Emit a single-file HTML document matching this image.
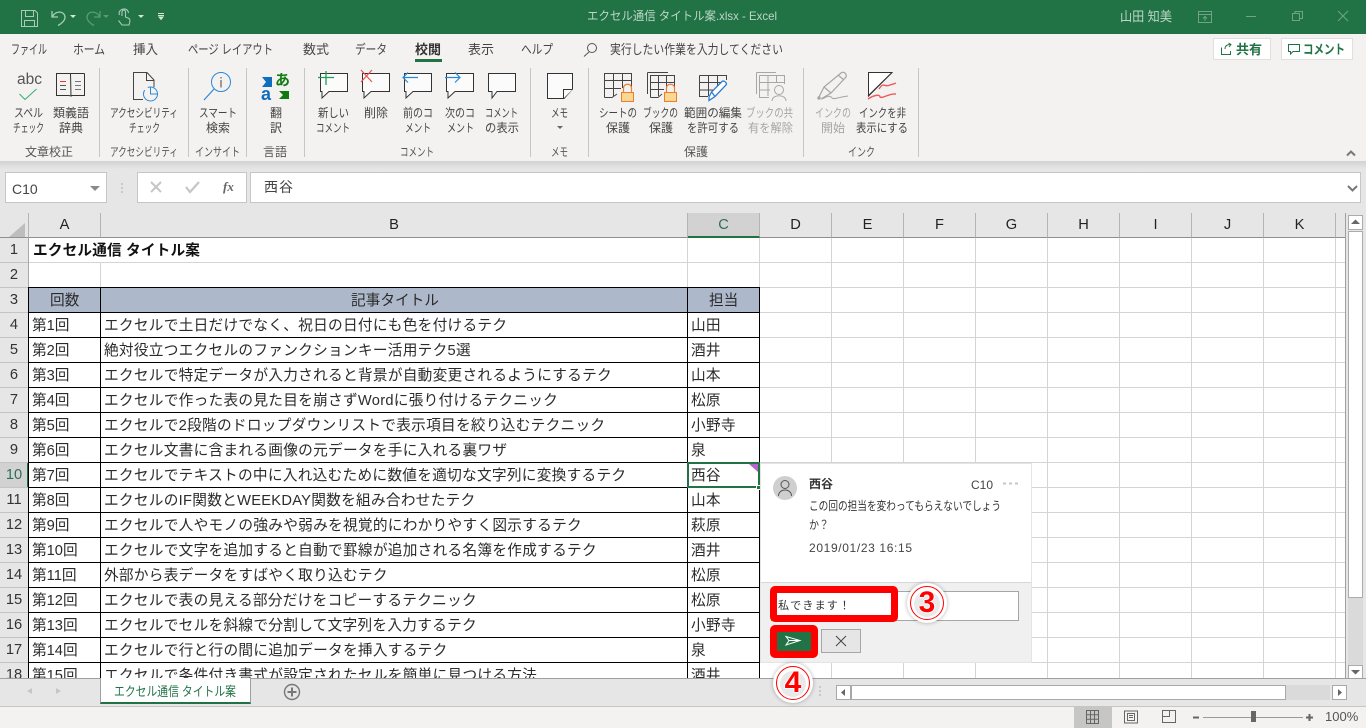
<!DOCTYPE html>
<html lang="ja"><head><meta charset="utf-8"><title>エクセル通信 タイトル案.xlsx - Excel</title>
<style>
*{box-sizing:border-box}
html,body{margin:0;padding:0;width:1366px;height:728px;overflow:hidden;background:#f3f2f1}
body{position:relative;font-family:"Liberation Sans","Noto Sans CJK JP",sans-serif;color:#333}
.a{position:absolute}
.t{position:absolute;white-space:nowrap;font-size:12px;line-height:16px;color:#444}
.c{transform:translateX(-50%);text-align:center}
.sep{position:absolute;top:68px;width:1px;height:89px;background:#c6c6c6}
.hl{position:absolute;top:213px;height:25px;background:#e6e6e6;font-size:14.67px;line-height:25px;text-align:center;color:#222;border-right:1px solid #b4b4b4;border-bottom:1px solid #8f8f8f}
.row{position:relative;height:25px;font-size:14.67px;line-height:26px;color:#2b2b2b;white-space:nowrap}
.row b{position:absolute;left:0;width:28px;height:24px;text-align:center;font-weight:normal;color:#333;line-height:25px}
.row i{position:absolute;font-style:normal;left:32px}
.row u{position:absolute;text-decoration:none;left:104px;letter-spacing:.28px}
.row s{position:absolute;text-decoration:none;left:691px;letter-spacing:.28px}
svg{position:absolute;left:0;top:0}
svg text{font-family:"Liberation Sans","Noto Sans CJK JP",sans-serif;font-size:12px;fill:#444}
.d{fill:#a6a6a6}
.g{fill:#555}
</style></head><body>

<div class="a" style="left:0;top:0;width:1366px;height:34px;background:#217346"></div>
<div class="a" style="left:0;top:34px;width:1366px;height:127px;background:#f3f2f1"></div>
<div class="a" style="left:0;top:161px;width:1366px;height:52px;background:#e6e6e6"></div>
<div class="a" style="left:0;top:161px;width:1366px;height:8px;background:linear-gradient(#d2d2d2,#e6e6e6)"></div>

<div class="a" style="left:415px;top:59px;width:27px;height:3px;background:#217346"></div>

<div class="a" style="left:1213px;top:38px;width:58px;height:22px;background:#fff;border:1px solid #e1dfdd"></div>
<div class="a" style="left:1281px;top:38px;width:72px;height:22px;background:#fff;border:1px solid #e1dfdd"></div>

<div class="sep" style="left:99px"></div><div class="sep" style="left:188px"></div><div class="sep" style="left:246px"></div><div class="sep" style="left:304px"></div><div class="sep" style="left:530px"></div><div class="sep" style="left:588px"></div><div class="sep" style="left:803px"></div><div class="sep" style="left:918px"></div>

<!-- formula bar -->
<div class="a" style="left:5px;top:172px;width:102px;height:31px;background:#fff;border:1px solid #c6c6c6"></div>
<div class="t" style="left:12px;top:181px;font-size:14px;color:#444">C10</div>
<div class="a" style="left:137px;top:172px;width:110px;height:31px;background:#fff;border:1px solid #c6c6c6"></div>
<div class="a" style="left:250px;top:172px;width:1111px;height:31px;background:#fff;border:1px solid #c6c6c6"></div>
<div class="t" style="left:264px;top:178px;font-size:14px;line-height:18px;letter-spacing:1px;color:#444">西谷</div>
<div class="t" style="left:223px;top:179px;font:italic bold 13px 'Liberation Serif',serif;color:#666">fx</div>

<!-- grid base -->
<div class="a" style="left:0;top:213px;width:29px;height:25px;background:#e6e6e6;border-right:1px solid #b4b4b4;border-bottom:1px solid #8f8f8f"></div>
<div class="hl" style="left:29px;width:72px">A</div>
<div class="hl" style="left:101px;width:587px">B</div>
<div class="hl" style="left:688px;width:72px;background:#d2d2d2;border-bottom:2px solid #217346;color:#2f6f5a;line-height:24px">C</div>
<div class="hl" style="left:760px;width:72px">D</div>
<div class="hl" style="left:832px;width:72px">E</div>
<div class="hl" style="left:904px;width:72px">F</div>
<div class="hl" style="left:976px;width:72px">G</div>
<div class="hl" style="left:1048px;width:72px">H</div>
<div class="hl" style="left:1120px;width:72px">I</div>
<div class="hl" style="left:1192px;width:72px">J</div>
<div class="hl" style="left:1264px;width:72px">K</div>
<div class="a" style="left:1336px;top:213px;width:30px;height:25px;background:#e6e6e6"></div>
<div class="a" style="left:1336px;top:237px;width:9px;height:1px;background:#8f8f8f"></div>

<div class="a" style="left:0;top:238px;width:1345px;height:440px;overflow:hidden;background:#fff">
  <div class="a" style="left:760px;top:0;width:585px;height:440px;background-image:linear-gradient(#d4d4d4 1px,transparent 1px),linear-gradient(90deg,transparent 71px,#d4d4d4 71px);background-size:100% 25px,72px 100%;background-position:0 24px,0 0"></div>
  <div class="a" style="left:29px;top:24px;width:731px;height:1px;background:#d4d4d4"></div>
  <div class="a" style="left:100px;top:25px;width:1px;height:24px;background:#d4d4d4"></div>
  <div class="a" style="left:687px;top:0;width:1px;height:49px;background:#d4d4d4"></div>
  <div class="a" style="left:759px;top:0;width:1px;height:49px;background:#d4d4d4"></div>
  <div class="a" style="left:0;top:0;width:29px;height:440px;background-color:#e6e6e6;background-image:linear-gradient(#c4c4c4 1px,transparent 1px);background-size:100% 25px;background-position:0 24px;border-right:1px solid #a8a8a8"></div>
  <div class="a" style="left:0;top:225px;width:29px;height:24px;background:#d2d2d2;border-right:2px solid #217346"></div>
  <div class="a" style="left:29px;top:50px;width:730px;height:24px;background:#adb9ca"></div>
  <div class="a" style="left:28px;top:49px;width:732px;height:391px;background-image:linear-gradient(#000 1px,transparent 1px);background-size:100% 25px"></div>
  <div class="a" style="left:28px;top:49px;width:1px;height:391px;background:#000"></div>
  <div class="a" style="left:100px;top:49px;width:1px;height:391px;background:#000"></div>
  <div class="a" style="left:687px;top:49px;width:1px;height:391px;background:#000"></div>
  <div class="a" style="left:759px;top:49px;width:1px;height:391px;background:#000"></div>
  <div class="a" style="left:0;top:0;width:1345px">
    <div class="row"><b>1</b><i style="font-weight:bold;left:33px;color:#111;letter-spacing:.15px">エクセル通信 タイトル案</i></div>
    <div class="row"><b>2</b></div>
    <div class="row"><b>3</b><i style="left:50px">回数</i><u style="left:351px;letter-spacing:0">記事タイトル</u><s style="left:709px;letter-spacing:0">担当</s></div>
    <div class="row"><b>4</b><i>第1回</i><u>エクセルで土日だけでなく、祝日の日付にも色を付けるテク</u><s>山田</s></div>
    <div class="row"><b>5</b><i>第2回</i><u>絶対役立つエクセルのファンクションキー活用テク5選</u><s>酒井</s></div>
    <div class="row"><b>6</b><i>第3回</i><u>エクセルで特定データが入力されると背景が自動変更されるようにするテク</u><s>山本</s></div>
    <div class="row"><b>7</b><i>第4回</i><u>エクセルで作った表の見た目を崩さずWordに張り付けるテクニック</u><s>松原</s></div>
    <div class="row"><b>8</b><i>第5回</i><u>エクセルで2段階のドロップダウンリストで表示項目を絞り込むテクニック</u><s>小野寺</s></div>
    <div class="row"><b>9</b><i>第6回</i><u>エクセル文書に含まれる画像の元データを手に入れる裏ワザ</u><s>泉</s></div>
    <div class="row"><b style="color:#2f6f5a">10</b><i>第7回</i><u>エクセルでテキストの中に入れ込むために数値を適切な文字列に変換するテク</u><s>西谷</s></div>
    <div class="row"><b>11</b><i>第8回</i><u>エクセルのIF関数とWEEKDAY関数を組み合わせたテク</u><s>山本</s></div>
    <div class="row"><b>12</b><i>第9回</i><u>エクセルで人やモノの強みや弱みを視覚的にわかりやすく図示するテク</u><s>萩原</s></div>
    <div class="row"><b>13</b><i>第10回</i><u>エクセルで文字を追加すると自動で罫線が追加される名簿を作成するテク</u><s>酒井</s></div>
    <div class="row"><b>14</b><i>第11回</i><u>外部から表データをすばやく取り込むテク</u><s>松原</s></div>
    <div class="row"><b>15</b><i>第12回</i><u>エクセルで表の見える部分だけをコピーするテクニック</u><s>松原</s></div>
    <div class="row"><b>16</b><i>第13回</i><u>エクセルでセルを斜線で分割して文字列を入力するテク</u><s>小野寺</s></div>
    <div class="row"><b>17</b><i>第14回</i><u>エクセルで行と行の間に追加データを挿入するテク</u><s>泉</s></div>
    <div class="row"><b>18</b><i>第15回</i><u>エクセルで条件付き書式が設定されたセルを簡単に見つける方法</u><s>酒井</s></div>
  </div>
  <div class="a" style="left:687px;top:224px;width:73px;height:26px;border:2px solid #217346"></div>
  <div class="a" style="left:756px;top:247px;width:5px;height:5px;background:#217346;border:1px solid #fff"></div>
</div>

<!-- scrollbars -->
<div class="a" style="left:1345px;top:213px;width:21px;height:465px;background:#e6e6e6;border-left:1px solid #a0a0a0"></div>
<div class="a" style="left:1348px;top:231px;width:15px;height:435px;background:#dadada"></div>
<div class="a" style="left:1348px;top:215px;width:15px;height:15px;background:#fff;border:1px solid #ababab"></div>
<div class="a" style="left:1348px;top:231px;width:15px;height:367px;background:#fff;border:1px solid #ababab"></div>
<div class="a" style="left:1348px;top:665px;width:15px;height:14px;background:#fff;border:1px solid #ababab"></div>

<div class="a" style="left:0;top:678px;width:1366px;height:29px;background:#e6e6e6;border-top:1px solid #a0a0a0;border-bottom:1px solid #c6c6c6"></div>
<div class="a" style="left:100px;top:678px;width:151px;height:26px;background:#fff;border:1px solid #a0a0a0;border-top:0;border-bottom:2px solid #217346"></div>
<div class="a" style="left:836px;top:685px;width:15px;height:15px;background:#fff;border:1px solid #a8a8a8"></div>
<div class="a" style="left:851px;top:685px;width:435px;height:15px;background:#fff;border:1px solid #a8a8a8"></div>
<div class="a" style="left:1286px;top:685px;width:44px;height:15px;background:#dadada"></div>
<div class="a" style="left:1332px;top:685px;width:15px;height:15px;background:#fff;border:1px solid #a8a8a8"></div>

<div class="a" style="left:1074px;top:707px;width:38px;height:21px;background:#c6c6c4"></div>
<div class="t" style="left:1325px;top:709px;font-size:13px;color:#555">100%</div>
<div class="a" style="left:1203px;top:717px;width:100px;height:1px;background:#9a9a9a"></div>
<div class="a" style="left:1251px;top:711px;width:5px;height:11px;background:#666"></div>

<!-- comment panel -->
<div class="a" style="left:760px;top:463px;width:272px;height:200px;background:#fff;border:1px solid #e4e4e4"></div>
<div class="a" style="left:761px;top:582px;width:270px;height:80px;background:#f0f0f0;border-top:1px solid #d8d8d8"></div>
<div class="a" style="left:771px;top:591px;width:248px;height:30px;background:#fff;border:1px solid #a6a6a6"></div>
<div class="a" style="left:770px;top:586px;width:128px;height:36px;background:#fff;border:7px solid #f00;border-radius:5px"></div>
<div class="t" style="left:778px;top:598px;font-size:11px;letter-spacing:1.2px;color:#333">私できます！</div>
<div class="a" style="left:770px;top:625px;width:48px;height:33px;background:#217346;border:7px solid #f00;border-radius:5px"></div>
<div class="a" style="left:821px;top:629px;width:40px;height:24px;background:#e6e6e6;border:1px solid #a6a6a6"></div>

<!-- number badges -->
<div class="a" style="left:907px;top:583px;width:40px;height:40px;border-radius:50%;background:#fff;box-shadow:0 0 4px rgba(0,0,0,.3)"></div>
<div class="a" style="left:910px;top:586px;width:34px;height:34px;border-radius:50%;background:#fff;border:1.5px solid #f00"></div>
<div class="a" style="left:914px;top:591px;width:26px;height:26px;border-radius:50%;background:#cfcfcf;opacity:.45"></div>
<div class="t c" style="left:927px;top:585px;font-size:30px;line-height:36px;font-weight:bold;color:#f00;text-shadow:1px 0 #fff,-1px 0 #fff,0 1px #fff,0 -1px #fff">3</div>
<div class="a" style="left:773px;top:663px;width:40px;height:40px;border-radius:50%;background:#fff;box-shadow:0 0 4px rgba(0,0,0,.3)"></div>
<div class="a" style="left:776px;top:666px;width:34px;height:34px;border-radius:50%;background:#fff;border:1.5px solid #f00"></div>
<div class="a" style="left:780px;top:671px;width:26px;height:26px;border-radius:50%;background:#cfcfcf;opacity:.45"></div>
<div class="t c" style="left:793px;top:665px;font-size:30px;line-height:36px;font-weight:bold;color:#f00;text-shadow:1px 0 #fff,-1px 0 #fff,0 1px #fff,0 -1px #fff">4</div>

<svg width="1366" height="728" viewBox="0 0 1366 728" fill="none">
<!-- title text -->
<text x="587" y="20" textLength="190" lengthAdjust="spacingAndGlyphs" style="fill:#bcd6c8">エクセル通信 タイトル案.xlsx  -  Excel</text>
<text x="1120" y="21" textLength="52" lengthAdjust="spacingAndGlyphs" style="fill:#bcd6c8;font-size:13px">山田 知美</text>
<!-- tabs -->
<g style="font-size:13px">
<text x="11" y="54" textLength="36" lengthAdjust="spacingAndGlyphs" style="font-size:13px">ファイル</text>
<text x="73" y="54" textLength="32" lengthAdjust="spacingAndGlyphs" style="font-size:13px">ホーム</text>
<text x="133" y="54" textLength="25" lengthAdjust="spacingAndGlyphs" style="font-size:13px">挿入</text>
<text x="188" y="54" textLength="85" lengthAdjust="spacingAndGlyphs" style="font-size:13px">ページ レイアウト</text>
<text x="303" y="54" textLength="26" lengthAdjust="spacingAndGlyphs" style="font-size:13px">数式</text>
<text x="355" y="54" textLength="32" lengthAdjust="spacingAndGlyphs" style="font-size:13px">データ</text>
<text x="415" y="54" textLength="26" lengthAdjust="spacingAndGlyphs" style="font-size:13px;font-weight:bold;fill:#333">校閲</text>
<text x="468" y="54" textLength="26" lengthAdjust="spacingAndGlyphs" style="font-size:13px">表示</text>
<text x="521" y="54" textLength="32" lengthAdjust="spacingAndGlyphs" style="font-size:13px">ヘルプ</text>
<text x="610" y="54" textLength="173" lengthAdjust="spacingAndGlyphs" style="font-size:13px">実行したい作業を入力してください</text>
</g>
<text x="1236" y="54" textLength="26" lengthAdjust="spacingAndGlyphs" style="font-size:13px;font-weight:bold;fill:#217346">共有</text>
<text x="1303" y="54" textLength="42" lengthAdjust="spacingAndGlyphs" style="font-size:13px;font-weight:bold;fill:#217346">コメント</text>
<!-- ribbon labels -->
<text x="14" y="117" textLength="29" lengthAdjust="spacingAndGlyphs">スペル</text>
<text x="13" y="132" textLength="31" lengthAdjust="spacingAndGlyphs">チェック</text>
<text x="53" y="117" textLength="36" lengthAdjust="spacingAndGlyphs">類義語</text>
<text x="59" y="132" textLength="24" lengthAdjust="spacingAndGlyphs">辞典</text>
<text x="110" y="117" textLength="68" lengthAdjust="spacingAndGlyphs">アクセシビリティ</text>
<text x="129" y="132" textLength="31" lengthAdjust="spacingAndGlyphs">チェック</text>
<text x="199" y="117" textLength="38" lengthAdjust="spacingAndGlyphs">スマート</text>
<text x="206" y="132" textLength="24" lengthAdjust="spacingAndGlyphs">検索</text>
<text x="270" y="117">翻</text>
<text x="270" y="132">訳</text>
<text x="318" y="117" textLength="31" lengthAdjust="spacingAndGlyphs">新しい</text>
<text x="316" y="132" textLength="34" lengthAdjust="spacingAndGlyphs">コメント</text>
<text x="364" y="117" textLength="24" lengthAdjust="spacingAndGlyphs">削除</text>
<text x="403" y="117" textLength="30" lengthAdjust="spacingAndGlyphs">前のコ</text>
<text x="405" y="132" textLength="26" lengthAdjust="spacingAndGlyphs">メント</text>
<text x="445" y="117" textLength="30" lengthAdjust="spacingAndGlyphs">次のコ</text>
<text x="447" y="132" textLength="27" lengthAdjust="spacingAndGlyphs">メント</text>
<text x="485" y="117" textLength="33" lengthAdjust="spacingAndGlyphs">コメント</text>
<text x="485" y="132" textLength="34" lengthAdjust="spacingAndGlyphs">の表示</text>
<text x="551" y="117" textLength="17" lengthAdjust="spacingAndGlyphs">メモ</text>
<text x="599" y="117" textLength="38" lengthAdjust="spacingAndGlyphs">シートの</text>
<text x="606" y="132" textLength="24" lengthAdjust="spacingAndGlyphs">保護</text>
<text x="643" y="117" textLength="35" lengthAdjust="spacingAndGlyphs">ブックの</text>
<text x="649" y="132" textLength="24" lengthAdjust="spacingAndGlyphs">保護</text>
<text x="684" y="117" textLength="58" lengthAdjust="spacingAndGlyphs">範囲の編集</text>
<text x="687" y="132" textLength="52" lengthAdjust="spacingAndGlyphs">を許可する</text>
<text class="d" x="746" y="117" textLength="47" lengthAdjust="spacingAndGlyphs">ブックの共</text>
<text class="d" x="748" y="132" textLength="45" lengthAdjust="spacingAndGlyphs">有を解除</text>
<text class="d" x="815" y="117" textLength="36" lengthAdjust="spacingAndGlyphs">インクの</text>
<text class="d" x="821" y="132" textLength="24" lengthAdjust="spacingAndGlyphs">開始</text>
<text x="859" y="117" textLength="47" lengthAdjust="spacingAndGlyphs">インクを非</text>
<text x="856" y="132" textLength="52" lengthAdjust="spacingAndGlyphs">表示にする</text>
<!-- groups -->
<text class="g" x="25" y="156" textLength="48" lengthAdjust="spacingAndGlyphs">文章校正</text>
<text class="g" x="110" y="156" textLength="68" lengthAdjust="spacingAndGlyphs">アクセシビリティ</text>
<text class="g" x="195" y="156" textLength="45" lengthAdjust="spacingAndGlyphs">インサイト</text>
<text class="g" x="263" y="156" textLength="24" lengthAdjust="spacingAndGlyphs">言語</text>
<text class="g" x="400" y="156" textLength="34" lengthAdjust="spacingAndGlyphs">コメント</text>
<text class="g" x="551" y="156" textLength="17" lengthAdjust="spacingAndGlyphs">メモ</text>
<text class="g" x="684" y="156" textLength="24" lengthAdjust="spacingAndGlyphs">保護</text>
<text class="g" x="848" y="156" textLength="27" lengthAdjust="spacingAndGlyphs">インク</text>
<!-- sheet tab -->
<text x="114" y="696" textLength="122" lengthAdjust="spacingAndGlyphs" style="fill:#217346;font-size:13px">エクセル通信 タイトル案</text>
<!-- comment text -->
<text x="809" y="488" style="font-weight:bold;fill:#333">西谷</text>
<text x="971" y="489" textLength="22" style="fill:#444">C10</text>
<text x="809" y="510" textLength="192" lengthAdjust="spacingAndGlyphs" style="fill:#333">この回の担当を変わってもらえないでしょう</text>
<text x="809" y="529" textLength="20" lengthAdjust="spacingAndGlyphs" style="fill:#333">か？</text>
<text x="809" y="552" textLength="103" style="fill:#444">2019/01/23 16:15</text>

<!-- title bar icons -->
<g stroke="#a9cbb8" stroke-width="1">
<path d="M21.500 10.500H35L37.500 13V26.500H21.500Z M25.500 10.500V16.500H33.500V10.500 M24.500 26.500V20.500H34.500V26.500"/>
<path d="M52 11V17H58 M52.500 16.500C56 10 65 11 65 17.500C65 20 62 23.500 58 25.500" stroke-width="1.300"/>
<path d="M100 11V17H94 M99.500 16.500C96 10 87 11 87 17.500C87 20 90 23.500 94 25.500" stroke="#5b9a79" stroke-width="1.300"/>
<path d="M122 16V12C122 9.500 125.500 9.500 125.500 12V17L129 18.500C130.500 19.500 130 22 129 25H122L118.500 20.500 M119.500 15C117 9 127.500 6 128.500 13" stroke-width="1.100"/>
<path d="M1198.500 11.500H1211.500V22.500H1198.500Z M1198.500 14.500H1211.500 M1205 21V16.500 M1203 18.500L1205 16.500L1207 18.500" stroke="#6fa488"/>
<path d="M1246 16.500H1256" stroke="#6fa488"/>
<path d="M1292.500 13.500H1299.500V20.500H1292.500Z M1295 13V11.500H1302.500V18.500H1300" stroke="#6fa488"/>
<path d="M1338 11L1348 21 M1348 11L1338 21" stroke="#6fa488"/>
</g>
<path d="M70 15H76L73 18Z" fill="#d5e5dc"/><path d="M103 15H109L106 18Z" fill="#5b9a79"/><path d="M138 15H144L141 18Z" fill="#d5e5dc"/>
<path d="M158 13.500H164 M158 15.500H164M159 17L161 19.500L163 17Z" stroke="#d5e5dc" fill="#d5e5dc"/>
<!-- search -->
<circle cx="592" cy="48" r="4.500" stroke="#555"/><path d="M589 52L584 56.500" stroke="#555"/>
<!-- share / comment -->
<path d="M1221.500 47.500V54.500H1230.500V51 M1225 49C1225 46 1227 44.500 1230.500 44.500 M1228.500 43L1231 44.500L1229 47" stroke="#217346"/>
<path d="M1288.500 44.500H1299.500V51.500H1293L1290.500 54V51.500H1288.500Z" stroke="#217346"/>
<path d="M1347 155.500L1351 151.500L1355 155.500" stroke="#777" stroke-width="2"/>
<!-- spell -->
<text x="17" y="84" style="font-size:15.500px;fill:#555">abc</text>
<path d="M19.500 94L25 99.500L36.500 89" stroke="#3cb371" stroke-width="1.100"/>
<!-- book -->
<path d="M56.500 73.500H70.500L71 96L69 95.500H56.500Z M84.500 73.500H70.500 M84.500 73.500V95.500H72L71 96" stroke="#333"/>
<path d="M60 81.500H66" stroke="#e33"/><path d="M60 85.500H66 M60 89.500H66" stroke="#555"/>
<path d="M75 81.500H81 M75 85.500H81 M75 89.500H81" stroke="#777"/>
<!-- accessibility -->
<path d="M143 99.500H133.500V72.500H147L154 80V87 M146.500 72.500V80.500H154" stroke="#444"/>
<circle cx="150.500" cy="94" r="7" stroke="#2b88d8" stroke-dasharray="26 4"/><path d="M150.500 87V94H157" stroke="#2b88d8"/>
<!-- lookup -->
<circle cx="221" cy="82" r="9.500" stroke="#2b88d8"/><path d="M214 89L204 100" stroke="#2b88d8" stroke-width="1.200"/>
<path d="M221 80V87.500 M221 77V78.500" stroke="#444"/>
<!-- translate -->
<path d="M272 77V87H262L266 82L262 77Z" fill="#106ebe"/>
<path d="M289 91V99H279L283 95L279 91Z" fill="#107c10"/>
<text x="275" y="85" style="font-weight:bold;font-size:15px;fill:#107c10">あ</text>
<text x="261" y="100" style="font-weight:bold;font-size:18px;fill:#106ebe">a</text>
<!-- comment icons -->
<g stroke="#333" fill="#fbfbfb">
<path d="M320.500 73.500H347.500V91.500H329L322 98V91.500H320.500Z"/>
<path d="M362.500 73.500H389.500V91.500H371L364 98V91.500H362.500Z"/>
<path d="M404.500 73.500H431.500V91.500H413L406 98V91.500H404.500Z"/>
<path d="M446.500 73.500H473.500V91.500H455L448 98V91.500H446.500Z"/>
<path d="M488.500 73.500H515.500V91.500H497L492 98V91.500H488.500Z"/>
<path d="M547.500 73.500H572.500V89L564 98.500H547.500Z"/>
<path d="M572.500 89.500H563.500V98.500"/>
</g>
<path d="M326 71V85 M318 77.500H334" stroke="#1f9d55" stroke-width="1.300"/>
<path d="M361 70L372 82 M372 70L361 82" stroke="#f0504f" stroke-width="1.200"/>
<path d="M403 77.500H418 M408 72.500L403 77.500L408 82.500" stroke="#2b88d8" stroke-width="1.200"/>
<path d="M445 77.500H460 M455 72.500L460 77.500L455 82.500" stroke="#2b88d8" stroke-width="1.200"/>
<path d="M557 126H563L560 129Z" fill="#666"/>
<!-- protect -->
<g stroke="#444">
<path d="M604.500 97.500V73.500H631.500V88 M604.500 97.500H612L617 94 M604.500 80.500H631.500 M604.500 88.500H621 M613.500 73.500V96 M622.500 73.500V88"/>
<path d="M647.500 72.500H668 M650.500 97.500V75.500H674.500V88 M647.500 72.500V94 M650.500 97.500H658L662 94 M650.500 82.500H674.500 M650.500 89.500H664 M658.500 75.500V96 M666.500 75.500V88"/>
<path d="M699.500 75.500H726.500V80 M699.500 75.500V96.500H708 M699.500 82.500H722 M699.500 90H714 M708.500 75.500V96 M717.500 75.500V88"/>
</g>
<rect x="621.500" y="92.500" width="12" height="9" fill="#fbd88f" stroke="#ed7d31"/><path d="M623.500 92V88C623.500 83 631.500 83 631.500 88V92" stroke="#ed7d31" stroke-width="1.200"/>
<rect x="664.500" y="92.500" width="12" height="9" fill="#fbd88f" stroke="#ed7d31"/><path d="M666.500 92V88C666.500 83 674.500 83 674.500 88V92" stroke="#ed7d31" stroke-width="1.200"/>
<path d="M709 97L711.500 92L722 81.500C724 80 727.500 83 726 85L715 96.500L709 100.500Z M711.500 92L715 96.500" fill="#fff" stroke="#2b7cd3" stroke-width="1.300"/>
<g stroke="#a6a6a6">
<path d="M756.500 72.500H776 M759.500 75.500H784.500V84 M756.500 72.500V94 M759.500 75.500V97.500H769 M759.500 82.500H784 M759.500 90H770 M768 75.500V96 M776.500 75.500V83"/>
<circle cx="779" cy="90" r="4.500" fill="#f3f2f1"/><path d="M772 101C772 94 786 94 786 101" fill="#f3f2f1"/>
</g>
<!-- ink -->
<path d="M819 97L824 87L841 73C844 71 847 74 846 77L831 93L821 99 M824 87L831 93 M838 75L844 80" stroke="#a6a6a6" stroke-width="1.200"/>
<circle cx="819" cy="98" r="1.700" fill="#a6a6a6"/><path d="M822 99C828 96 830 95 832 98C834 100 838 97 848 96" stroke="#a6a6a6"/>
<path d="M868.500 72.500H892L868.500 96Z" stroke="#333" fill="#fff"/><path d="M868 96L892 72.500" stroke="#333"/>
<path d="M879 89C884 81 884 88 890 85C893 84 894 84 896 83 M868 99C874 95 880 94 880 97C882 99 890 93 896 94" stroke="#f05a5a" stroke-width="1.400"/>
<!-- formula -->
<path d="M90 186H100L95 191Z" fill="#8a8a8a"/>
<path d="M122 183V185 M122 187V189 M122 191V193" stroke="#aaa"/>
<path d="M151 182L161 192 M161 182L151 192" stroke="#c6c6c6" stroke-width="2"/>
<path d="M186 187L190 192L199 182" stroke="#c6c6c6" stroke-width="2.200"/>
<path d="M1348 186L1352.500 190.500L1357 186" stroke="#777" stroke-width="2"/>
<!-- select all -->
<path d="M25 223V237H9Z" fill="#bdbdbd"/>
<!-- comment indicator -->
<path d="M749 464H758V472Z" fill="#b665c9"/>
<!-- avatar -->
<circle cx="785" cy="488" r="12" fill="#cfcfcf"/><circle cx="785" cy="484.500" r="4" stroke="#555"/><path d="M778.500 496C778.500 488 791.500 488 791.500 496" stroke="#555"/>
<path d="M1003 483.500H1006M1009 483.500H1012M1015 483.500H1018" stroke="#c6c6c6" stroke-width="2"/>
<!-- send/cancel -->
<path d="M786 636.500L800 640.500L786 645L789 640.500Z M789 640.500H800" stroke="#fff"/>
<path d="M836 636L846 646 M846 636L836 646" stroke="#444"/>
<!-- tab bar -->
<path d="M32 688V694L27 691Z" fill="#c6c6c6"/><path d="M56 688V694L61 691Z" fill="#c6c6c6"/>
<circle cx="292" cy="692" r="7.500" stroke="#777" stroke-width="1.400"/><path d="M292 687.500V696.500 M287.500 692H296.500" stroke="#777" stroke-width="2"/>
<path d="M820 686V688 M820 690V692 M820 694V696" stroke="#aaa"/>
<path d="M845 689V696L841 692.500Z" fill="#666"/><path d="M1338 689V696L1342 692.500Z" fill="#666"/>
<path d="M1351 224L1355.500 219.500L1360 224Z" fill="#666"/><path d="M1351 670H1360L1355.500 674.500Z" fill="#666"/>
<!-- status -->
<path d="M1086.500 710.500H1098.500V723.500H1086.500Z M1086.500 714.800H1098.500 M1086.500 719.200H1098.500 M1090.500 710.500V723.500 M1094.500 710.500V723.500" stroke="#666"/>
<path d="M1124.500 711H1137.500V723H1124.500Z M1127.500 713.500H1134.500V720.500H1127.500Z M1129 715.500H1133 M1129 717.500H1133" stroke="#666"/>
<path d="M1162.500 710.500V722.500H1175.500V710.500Z M1162.500 716.500H1169.500V710.500" stroke="#666"/>
<path d="M1193 717.500H1199 M1306 717.500H1313 M1309.500 714V721" stroke="#666" stroke-width="2"/>
</svg>
</body></html>
